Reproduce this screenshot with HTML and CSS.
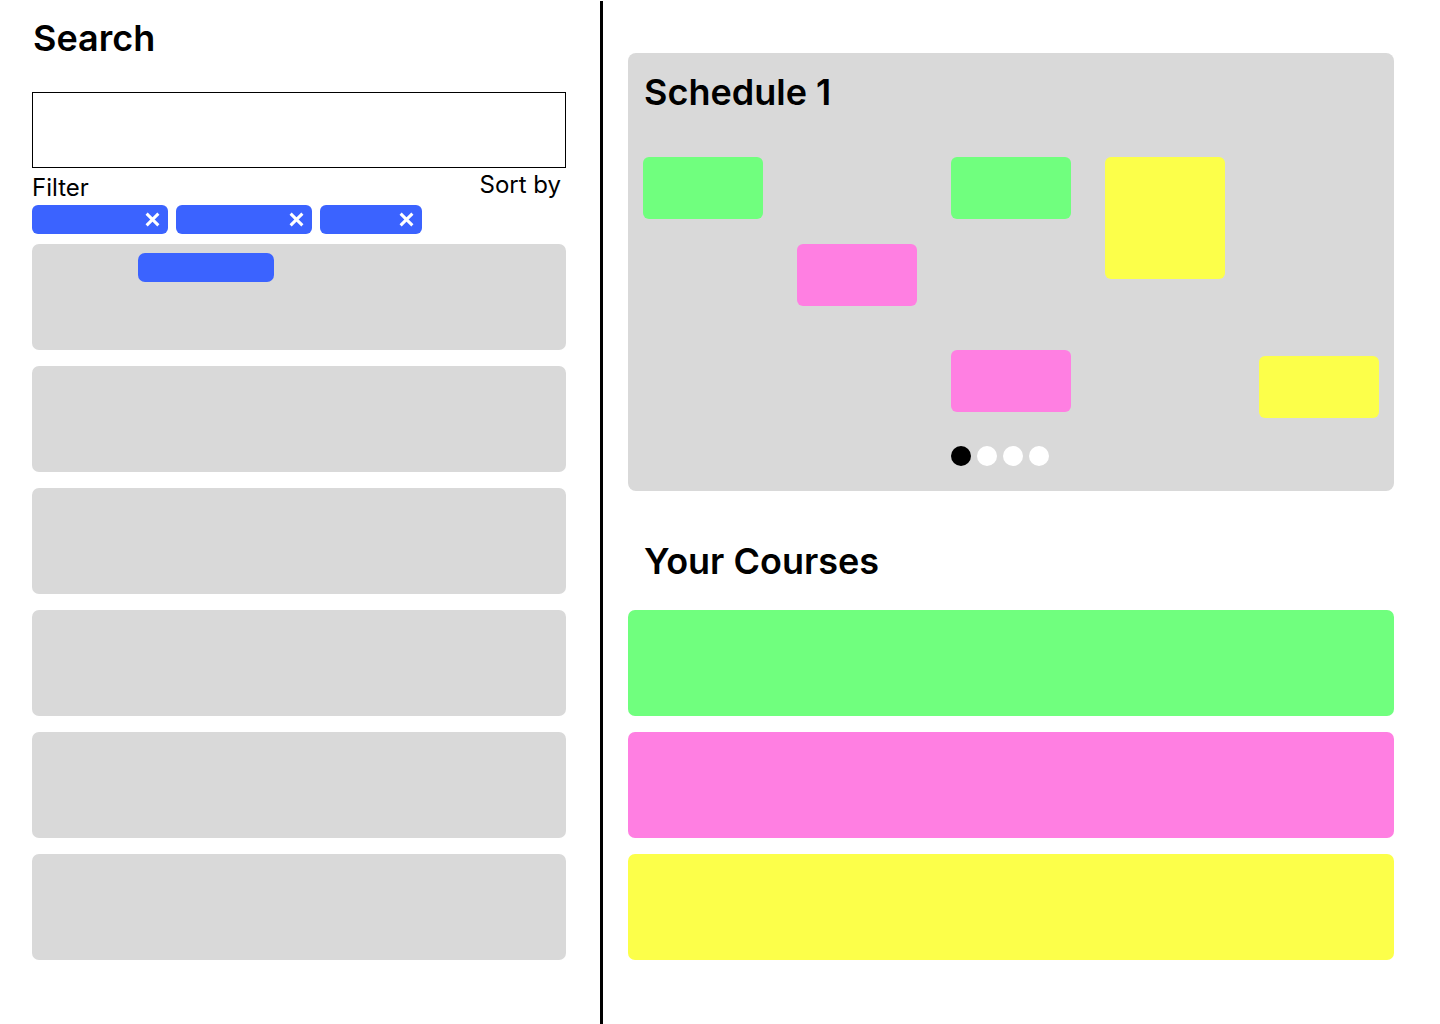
FILE: index.html
```html
<!DOCTYPE html>
<html lang="en">
<head>
    <meta charset="UTF-8">
    <meta name="viewport" content="width=device-width, initial-scale=1.0">
    <title>Course Planner</title>
    <link rel="stylesheet" href="styles.css">
</head>
<body>
    <div class="page">
        <section class="search-pane">
            <h1 class="pane-title">Search</h1>
            <div class="search-box"></div>

            <div class="filter-row">
                <span class="filter-label">Filter</span>
                <span class="sort-label">Sort by</span>
            </div>

            <div class="chips">
                <span class="chip">
                    <svg class="chip-x" viewBox="0 0 14 14"><path d="M1.5 1.5 L12.5 12.5 M12.5 1.5 L1.5 12.5"/></svg>
                </span>
                <span class="chip">
                    <svg class="chip-x" viewBox="0 0 14 14"><path d="M1.5 1.5 L12.5 12.5 M12.5 1.5 L1.5 12.5"/></svg>
                </span>
                <span class="chip chip-short">
                    <svg class="chip-x" viewBox="0 0 14 14"><path d="M1.5 1.5 L12.5 12.5 M12.5 1.5 L1.5 12.5"/></svg>
                </span>
            </div>

            <div class="results">
                <div class="result-card"><span class="tag"></span></div>
                <div class="result-card"></div>
                <div class="result-card"></div>
                <div class="result-card"></div>
                <div class="result-card"></div>
                <div class="result-card"></div>
            </div>
        </section>

        <div class="divider"></div>

        <section class="main-pane">
            <div class="schedule">
                <h2 class="schedule-title">Schedule 1</h2>
                <div class="calendar">
                    <div class="slot green" style="left: 0; top: 0;"></div>
                    <div class="slot pink" style="left: 154px; top: 87px;"></div>
                    <div class="slot green" style="left: 308px; top: 0;"></div>
                    <div class="slot yellow tall" style="left: 462px; top: 0;"></div>
                    <div class="slot pink" style="left: 308px; top: 193px;"></div>
                    <div class="slot yellow" style="left: 616px; top: 199px;"></div>
                </div>
                <div class="dots">
                    <span class="dot active"></span>
                    <span class="dot"></span>
                    <span class="dot"></span>
                    <span class="dot"></span>
                </div>
            </div>

            <h2 class="courses-title">Your Courses</h2>
            <div class="courses">
                <div class="course green"></div>
                <div class="course pink"></div>
                <div class="course yellow"></div>
            </div>
        </section>
    </div>
</body>
</html>
```

FILE: styles.css
```css
body { margin: 0; font-family: Inter, "Noto Sans", sans-serif; color: #000; background: #fff; }
.page { display: flex; height: 1024px; overflow: hidden; }

/* left: search */
.search-pane { width: 534px; padding: 16px 34px 0 32px; }
.pane-title { margin: 0; font-size: 36px; line-height: 44px; font-weight: 600; padding-left: 1px; }
.search-box { margin-top: 32px; height: 74px; border: 1px solid #000; }
.filter-row { display: flex; justify-content: space-between; align-items: flex-start; margin-top: 2px; font-size: 24px; line-height: 29px; }
.filter-label { padding-top: 3px; }
.sort-label { padding-right: 5px; }
.chips { display: flex; gap: 8px; margin-top: 3px; }
.chip { position: relative; width: 136px; height: 29px; background: #3b63ff; border-radius: 6px; }
.chip-short { width: 102px; }
.chip-x { position: absolute; right: 8px; top: 7px; width: 15px; height: 15px; stroke: #fff; stroke-width: 2.8; fill: none; }
.results { display: flex; flex-direction: column; gap: 16px; margin-top: 10px; }
.result-card { height: 106px; background: #d9d9d9; border-radius: 7px; }
.tag { display: block; width: 136px; height: 29px; margin: 9px 0 0 106px; background: #3b63ff; border-radius: 7px; }

.divider { width: 3px; margin-top: 1px; background: #000; }

/* right: schedule + courses */
.main-pane { width: 766px; padding-left: 25px; }
.schedule { margin-top: 53px; padding: 17px 15px 25px; background: #d9d9d9; border-radius: 8px; }
.schedule-title { margin: 0; font-size: 36px; line-height: 44px; font-weight: 600; padding-left: 1px; }
.calendar { position: relative; height: 262px; margin-top: 43px; }
.slot { position: absolute; width: 120px; height: 62px; border-radius: 6px; }
.slot.tall { height: 122px; }
.dots { display: flex; gap: 6px; margin: 27px 0 0 308px; }
.dot { width: 20px; height: 20px; border-radius: 50%; background: #fff; }
.dot.active { background: #000; }

.courses-title { margin: 48px 0 0; padding-left: 16px; font-size: 36px; line-height: 44px; font-weight: 600; }
.courses { display: flex; flex-direction: column; gap: 16px; margin-top: 27px; }
.course { height: 106px; border-radius: 7px; }

.green { background: #70ff7e; }
.pink { background: #ff7fe2; }
.yellow { background: #fcff4a; }
```
